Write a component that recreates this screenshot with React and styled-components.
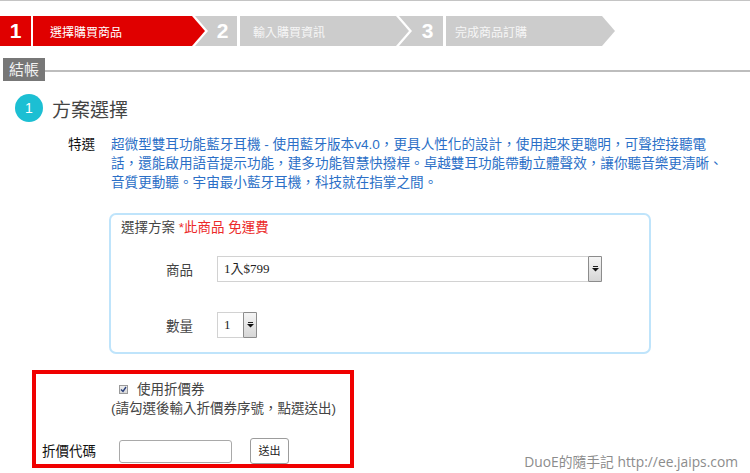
import React from "react"
import styled, { createGlobalStyle } from "styled-components"

const colors = {
  red: "#e00000",
  stepGrey: "#cccccc",
  text: "#444444",
  blue: "#2b6fc7",
  cyan: "#1cbfd3",
}

const GlobalStyle = createGlobalStyle`
  html, body {
    margin: 0;
    padding: 0;
    background: #ffffff;
  }
  body {
    font-family: "Liberation Sans", "Noto Sans CJK TC", sans-serif;
    color: ${colors.text};
  }
`

const Page = styled.div`
  position: relative;
  width: 750px;
  height: 473px;
  overflow: hidden;
  border-top: 1px solid #c4c4c4;
  box-sizing: border-box;
`

const Stepper = styled.div`
  display: flex;
  height: 30px;
  margin-top: 15px;
`

const StepNum = styled.div`
  display: flex;
  align-items: center;
  justify-content: center;
  box-sizing: border-box;
  width: ${({ $w }) => $w}px;
  margin-left: ${({ $ml }) => $ml}px;
  padding-left: ${({ $notch }) => ($notch ? 13 : 0)}px;
  background: ${({ $active }) => ($active ? colors.red : colors.stepGrey)};
  color: #ffffff;
  font: bold 21px "Liberation Sans", sans-serif;
  clip-path: ${({ $notch }) =>
    $notch
      ? "polygon(0 0, 100% 0, 100% 100%, 0 100%, 13px 50%)"
      : "none"};
`

const StepLabel = styled.div`
  display: flex;
  align-items: center;
  box-sizing: border-box;
  width: ${({ $w }) => $w}px;
  margin-left: ${({ $ml }) => $ml}px;
  padding-left: ${({ $pl }) => $pl}px;
  background: ${({ $active }) => ($active ? colors.red : colors.stepGrey)};
  color: ${({ $active }) => ($active ? "#ffffff" : "#f6f6f6")};
  font-size: 12px;
  clip-path: polygon(0 0, calc(100% - 13px) 0, 100% 50%, calc(100% - 13px) 100%, 0 100%);
  position: relative;
  z-index: 1;
`

const TabBar = styled.div`
  display: flex;
  align-items: center;
  margin-top: 12px;
  padding-left: 3px;
`

const Tab = styled.div`
  width: 42px;
  height: 23px;
  background: #777777;
  color: #f2f2f2;
  font-size: 15px;
  line-height: 23px;
  text-align: center;
`

const TabLine = styled.div`
  flex: 1;
  height: 2px;
  margin-top: 3px;
  background: #bdbdbd;
`

const SectionTitle = styled.div`
  display: flex;
  align-items: center;
  gap: 9px;
  margin: 13px 0 0 15px;
  font-size: 19px;
  color: #444;
`

const Badge = styled.span`
  width: 28px;
  height: 28px;
  border-radius: 50%;
  background: ${colors.cyan};
  color: #ffffff;
  font-size: 14px;
  line-height: 28px;
  text-align: center;
`

const Feature = styled.div`
  display: flex;
  margin: 13px 0 0 68px;
  font-size: 13.6px;
  line-height: 19px;
`

const FeatureTag = styled.div`
  width: 43px;
  flex-shrink: 0;
  color: #111;
`

const FeatureText = styled.div`
  color: ${colors.blue};
  white-space: nowrap;
`

const PlanBox = styled.div`
  width: 542px;
  box-sizing: border-box;
  margin: 21px 0 0 109px;
  padding: 3px 10px 14px;
  border: 2px solid #bfe4fb;
  border-radius: 7px;
`

const PlanHeading = styled.div`
  font-size: 13.5px;
  line-height: 19px;
  color: #444;
`

const Hint = styled.span`
  color: #ec2a2a;
`

const FieldRow = styled.div`
  display: flex;
  align-items: center;
  margin-top: ${({ $mt }) => $mt}px;
  padding-left: 45px;
`

const FieldLabel = styled.div`
  width: 51px;
  font-size: 13.5px;
  color: #444;
`

const Select = styled.div`
  display: flex;
  width: ${({ $w }) => $w}px;
  height: 26px;
  box-sizing: border-box;
  border: 1px solid #d2d2d2;
  background: #ffffff;
`

const SelectValue = styled.div`
  flex: 1;
  padding-left: 6px;
  font: 13px/24px "Liberation Serif", "Noto Sans CJK TC", serif;
  color: #222;
`

const SelectArrow = styled.div`
  display: flex;
  align-items: center;
  justify-content: center;
  width: 12px;
  margin: -1px -1px -1px 0;
  border: 1px solid #8c8c8c;
  border-radius: 1px;
  background: linear-gradient(#f5f5f5, #d6d6d6);
`

const CouponBox = styled.div`
  width: 322px;
  height: 98px;
  box-sizing: border-box;
  margin: 16px 0 0 32px;
  padding-top: 6px;
  border: 4px solid #f00000;
  font-size: 13.5px;
  line-height: 19px;
  color: #444;
`

const CheckRow = styled.div`
  display: flex;
  align-items: center;
  gap: 9px;
  padding-left: 83px;
`

const CheckMark = styled.span`
  display: flex;
  align-items: center;
  justify-content: center;
  width: 9px;
  height: 9px;
  box-sizing: border-box;
  border: 1px solid #9a9a9a;
  background: linear-gradient(#eeeeee, #d8d8d8);
`

const Note = styled.div`
  padding-left: 75px;
`

const CodeRow = styled.div`
  display: flex;
  align-items: center;
  margin-top: 20px;
  padding-left: 6px;
  height: 26px;
`

const CodeLabel = styled.div`
  width: 77px;
  color: #111;
`

const CodeInput = styled.div`
  width: 113px;
  height: 23px;
  box-sizing: border-box;
  border: 1px solid #a9a9a9;
  border-radius: 3px;
  background: #fff;
`

const SendButton = styled.div`
  width: 39px;
  height: 26px;
  box-sizing: border-box;
  margin-left: 18px;
  border: 1px solid #9c9c9c;
  border-radius: 3px;
  background: #ffffff;
  font-size: 11px;
  line-height: 24px;
  text-align: center;
  color: #222;
`

const Watermark = styled.div`
  position: absolute;
  right: 12px;
  bottom: 2px;
  font: 13.8px/18px "Open Sans", "Noto Sans CJK TC", sans-serif;
  color: #8c8c8c;
`

function ArrowIcon() {
  return (
    <svg width="7" height="6" viewBox="0 0 7 6">
      <rect x="1" y="0" width="5" height="1" fill="#222" />
      <polygon points="0,2 7,2 3.5,5.5" fill="#111" />
    </svg>
  )
}

function FakeSelect({ width, value }) {
  return (
    <Select $w={width}>
      <SelectValue>{value}</SelectValue>
      <SelectArrow>
        <ArrowIcon />
      </SelectArrow>
    </Select>
  )
}

export default function App() {
  return (
    <Page>
      <GlobalStyle />
      <Stepper>
        <StepNum $active $w={31}>1</StepNum>
        <StepLabel $active $w={172} $ml={2} $pl={17}>選擇購買商品</StepLabel>
        <StepNum $notch $w={42} $ml={-10}>2</StepNum>
        <StepLabel $w={169} $ml={3} $pl={13}>輸入購買資訊</StepLabel>
        <StepNum $notch $w={44} $ml={-10}>3</StepNum>
        <StepLabel $w={169} $ml={3} $pl={9}>完成商品訂購</StepLabel>
      </Stepper>

      <TabBar>
        <Tab>結帳</Tab>
        <TabLine />
      </TabBar>

      <SectionTitle>
        <Badge>1</Badge>
        方案選擇
      </SectionTitle>

      <Feature>
        <FeatureTag>特選</FeatureTag>
        <FeatureText>
          超微型雙耳功能藍牙耳機 - 使用藍牙版本v4.0，更具人性化的設計，使用起來更聰明，可聲控接聽電
          <br />
          話，還能啟用語音提示功能，建多功能智慧快撥桿。卓越雙耳功能帶動立體聲效，讓你聽音樂更清晰、
          <br />
          音質更動聽。宇宙最小藍牙耳機，科技就在指掌之間。
        </FeatureText>
      </Feature>

      <PlanBox>
        <PlanHeading>
          選擇方案 <Hint>*此商品 免運費</Hint>
        </PlanHeading>
        <FieldRow $mt={19}>
          <FieldLabel>商品</FieldLabel>
          <FakeSelect width={385} value="1入$799" />
        </FieldRow>
        <FieldRow $mt={30}>
          <FieldLabel>數量</FieldLabel>
          <FakeSelect width={40} value="1" />
        </FieldRow>
      </PlanBox>

      <CouponBox>
        <CheckRow>
          <CheckMark>
            <svg width="7" height="7" viewBox="0 0 7 7">
              <polyline points="1,3.5 3,5.5 6,1" fill="none" stroke="#2a3f7a" strokeWidth="1.4" />
            </svg>
          </CheckMark>
          使用折價券
        </CheckRow>
        <Note>(請勾選後輸入折價券序號，點選送出)</Note>
        <CodeRow>
          <CodeLabel>折價代碼</CodeLabel>
          <CodeInput />
          <SendButton>送出</SendButton>
        </CodeRow>
      </CouponBox>

      <Watermark>DuoE的隨手記 http://ee.jaips.com</Watermark>
    </Page>
  )
}
